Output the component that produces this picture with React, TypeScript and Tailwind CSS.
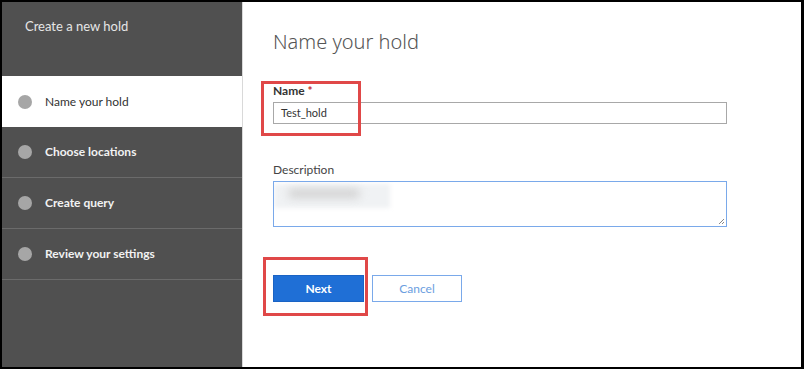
import React from 'react';

const steps = [
  { label: 'Name your hold', active: true },
  { label: 'Choose locations', active: false },
  { label: 'Create query', active: false },
  { label: 'Review your settings', active: false },
];

const App: React.FC = () => {
  return (
    <div className="w-[804px] h-[369px] bg-black pt-[2px] pl-[2px] pr-[3px] pb-[2px] font-['Lato','Liberation_Sans',sans-serif]">
      <div className="flex h-full">
        {/* Wizard steps */}
        <aside className="w-[241px] bg-[#505050] border-r border-[#d9d9d9] flex flex-col">
          <div className="h-[74px] pl-[23px] pt-[15px] text-[13px] text-[#e6e6e6]">Create a new hold</div>
          {steps.map((s) =>
            s.active ? (
              <div key={s.label} className="h-[51px] bg-white flex items-center pl-[16px] gap-[13px]">
                <span className="w-[14px] h-[14px] rounded-full bg-[#a6a6a6]" />
                <span className="text-[12px] text-[#333]">{s.label}</span>
              </div>
            ) : (
              <div key={s.label} className="h-[51px] border-b border-[#6b6b6b] flex items-center pl-[16px] gap-[13px]">
                <span className="w-[14px] h-[14px] rounded-full bg-[#a6a6a6]" />
                <span className="text-[12px] font-bold text-[#f2f2f2]">{s.label}</span>
              </div>
            )
          )}
        </aside>

        {/* Form */}
        <main className="flex-1 bg-white pl-[30px] pt-[26px]">
          <h1 className="text-[20px] font-light text-[#555] leading-[28px] font-['Noto_Sans','Liberation_Sans',sans-serif]">Name your hold</h1>

          <div className="relative mt-[27px] w-[454px]">
            <div className="absolute left-[-12px] top-[-2px] w-[100px] h-[55px] border-[3px] border-[#e04848] pointer-events-none" />
            <label className="block text-[12px] font-bold text-[#333] leading-[16px]">
              Name <span className="text-[#c4262e]">*</span>
            </label>
            <div className="mt-[3px] h-[22px] border border-[#a8a8a8] flex items-center pl-[7px] text-[11px] text-[#333]">
              Test_hold
            </div>
          </div>

          <div className="mt-[38px] w-[454px]">
            <label className="block text-[12px] text-[#444] leading-[16px]">Description</label>
            <div className="relative mt-[3px] h-[46px] border border-[#7aa9ea] overflow-hidden">
              <div className="absolute left-0 top-[2px] w-[116px] h-[24px] bg-[#f0f2f4] blur-[2px]" />
              <div className="absolute left-[14px] top-[7px] w-[72px] h-[9px] rounded-full bg-[#d2d2d2] blur-[4px]" />
              <svg className="absolute right-[1px] bottom-[1px]" width="8" height="8" viewBox="0 0 8 8">
                <path d="M7 2 L2 7 M7 5 L5 7" stroke="#888" strokeWidth="1" />
              </svg>
            </div>
          </div>

          <div className="relative mt-[48px] flex gap-[8px]">
            <div className="absolute left-[-10px] top-[-18px] w-[105px] h-[59px] border-[3px] border-[#e04848] pointer-events-none" />
            <button className="w-[91px] h-[27px] bg-[#1f6fd6] border border-[#1a63c4] text-white text-[12px] font-bold">
              Next
            </button>
            <button className="w-[90px] h-[27px] bg-white border border-[#7aa9ea] text-[#6b9ee0] text-[12px]">
              Cancel
            </button>
          </div>
        </main>
      </div>
    </div>
  );
};

export default App;
